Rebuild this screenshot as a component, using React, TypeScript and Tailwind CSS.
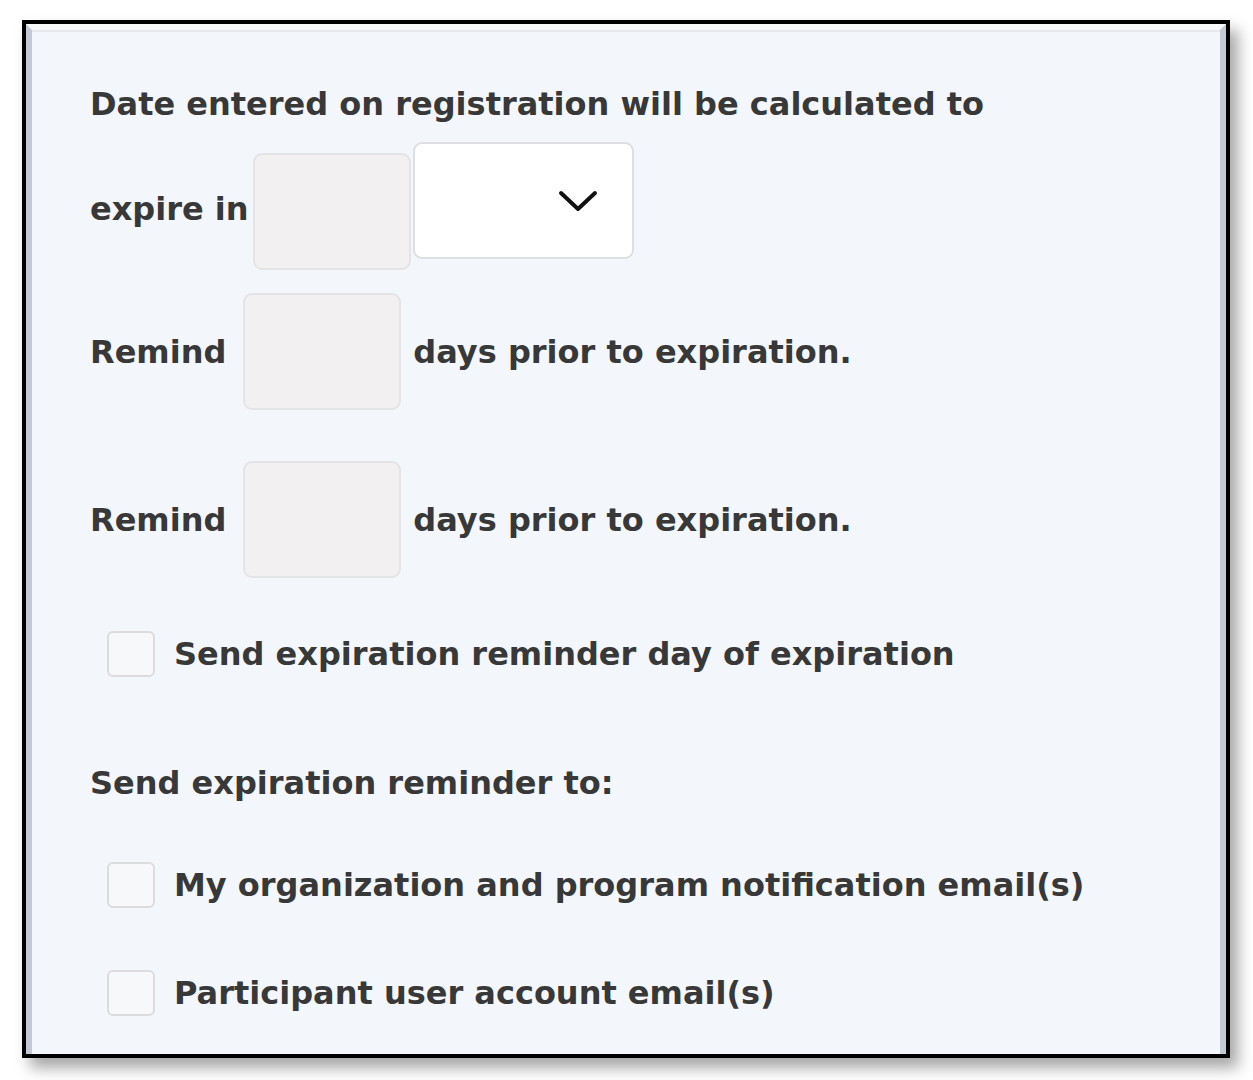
import React from "react";

const font = { fontFamily: '"DejaVu Sans", "Liberation Sans", sans-serif' };

function Box({ className = "" }: { className?: string }) {
  return (
    <div
      className={`h-[117px] w-[158px] shrink-0 rounded-[9px] border-2 border-[#e4e4e7] bg-[#f2f0f0] ${className}`}
    />
  );
}

function Check({ label, className = "" }: { label: string; className?: string }) {
  return (
    <label className={`flex items-center ${className}`}>
      <span className="ml-[17px] h-[46px] w-[48px] shrink-0 rounded-[6px] border-2 border-[#dcdcdf] bg-[#f7f8fa]" />
      <span className="ml-[19px] text-[32px] leading-[40px]">{label}</span>
    </label>
  );
}

export default function App() {
  return (
    <div className="h-[1080px] w-[1253px] bg-white pl-[22px] pt-[20px]" style={font}>
      <div className="h-[1038px] w-[1208px] border-4 border-black bg-[#f3f6fa] shadow-[8px_10px_14px_rgba(0,0,0,0.35)]">
        <div className="h-full border-x-[6px] border-t-[6px] border-x-[#c3cad6] border-t-[#f8f9fb]">
          <div className="h-full border-t-2 border-[#e6e8ec] pl-[58px] pt-[52px] font-bold text-[#383838]">
            {/* header line */}
            <p className="text-[32px] leading-[40px]">
              Date entered on registration will be calculated to
            </p>

            {/* expire in row */}
            <div className="mt-[18px] flex h-[128px] items-start">
              <span className="mt-[47px] text-[32px] leading-[40px]">expire in</span>
              <Box className="ml-[4px] mt-[11px]" />
              <div className="ml-[2px] flex h-[117px] w-[221px] items-center justify-end rounded-[9px] border-2 border-[#dedfe2] bg-white pr-[34px]">
                <svg width="40" height="24" viewBox="0 0 40 24" fill="none">
                  <path d="M3 4 L20 20 L37 4" stroke="#111" strokeWidth="4" strokeLinecap="round" strokeLinejoin="round" />
                </svg>
              </div>
            </div>

            {/* remind rows */}
            <div className="mt-[23px] flex items-center">
              <span className="text-[32px] leading-[40px]">Remind</span>
              <Box className="ml-[17px]" />
              <span className="ml-[12px] text-[32px] leading-[40px]">days prior to expiration.</span>
            </div>
            <div className="mt-[51px] flex items-center">
              <span className="text-[32px] leading-[40px]">Remind</span>
              <Box className="ml-[17px]" />
              <span className="ml-[12px] text-[32px] leading-[40px]">days prior to expiration.</span>
            </div>

            <Check label="Send expiration reminder day of expiration" className="mt-[53px]" />

            <p className="mt-[86px] text-[32px] leading-[40px]">Send expiration reminder to:</p>

            <Check label="My organization and program notification email(s)" className="mt-[59px]" />
            <Check label="Participant user account email(s)" className="mt-[62px]" />
          </div>
        </div>
      </div>
    </div>
  );
}
